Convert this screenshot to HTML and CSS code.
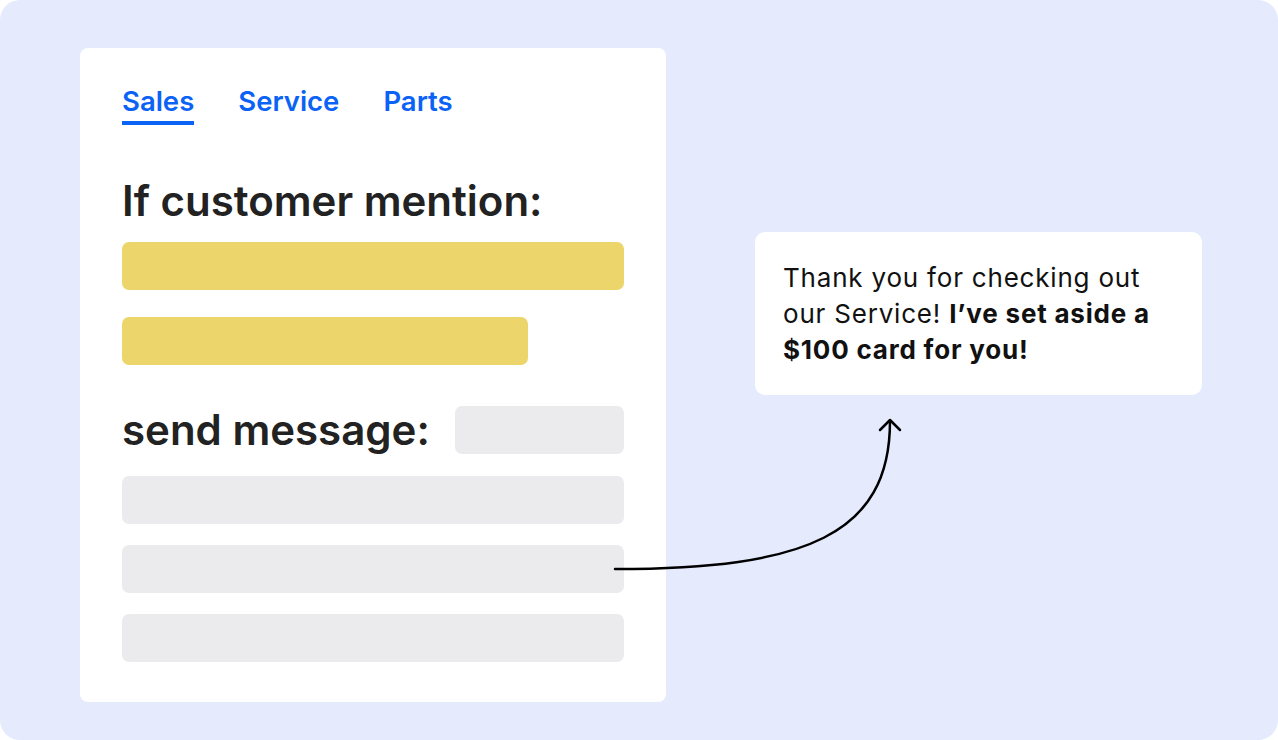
FILE: index.html
```html
<!DOCTYPE html>
<html>
<head>
<meta charset="utf-8">
<link rel="stylesheet" href="styles.css">
</head>
<body>
<div class="stage">
  <div class="card">
    <nav class="tabs">
      <span class="tab active">Sales</span>
      <span class="tab">Service</span>
      <span class="tab">Parts</span>
    </nav>
    <h2 class="heading">If customer mention:</h2>
    <div class="bar yellow full"></div>
    <div class="bar yellow short"></div>
    <div class="send-row">
      <h2 class="heading send">send message:</h2>
      <div class="bar gray chip"></div>
    </div>
    <div class="bar gray full"></div>
    <div class="bar gray full"></div>
    <div class="bar gray full last"></div>
  </div>
  <div class="message">
    <p>Thank you for checking out our Service! <strong>I’ve set aside a $100 card for you!</strong></p>
  </div>
  <svg class="connector" width="1278" height="740" viewBox="0 0 1278 740">
    <path d="M615 569 C 805 569, 890 535, 890 421" fill="none" stroke="#000" stroke-width="2.5" stroke-linecap="round"/>
    <path d="M880 430 L890 420 L900 430" fill="none" stroke="#000" stroke-width="2.5" stroke-linecap="round" stroke-linejoin="round"/>
  </svg>
</div>
</body>
</html>
```
FILE: styles.css
```css
* { box-sizing: border-box; }
html, body { margin: 0; padding: 0; background: #ffffff; }
body { font-family: Inter, "Noto Sans", sans-serif; }
.stage {
  position: relative;
  width: 1278px;
  height: 740px;
  background: #E5EBFD;
  border-radius: 20px;
  display: flex;
  align-items: flex-start;
  padding: 48px 0 0 80px;
}
.card {
  width: 586px;
  height: 654px;
  background: #fff;
  border-radius: 8px;
  padding: 37px 42px 0 42px;
  display: flex;
  flex-direction: column;
}
.tabs {
  display: flex;
  gap: 44px;
}
.tab {
  font-size: 27.5px;
  font-weight: 600;
  color: #0B63F6;
  line-height: 32px;
  padding-bottom: 4px;
  border-bottom: 4px solid transparent;
}
.tab.active { border-bottom-color: #0B63F6; }
.heading {
  margin: 0;
  font-size: 42px;
  font-weight: 600;
  color: #222;
  line-height: 48px;
}
.card > .heading { margin-top: 52px; margin-bottom: 17px; }
.bar { height: 48px; border-radius: 7px; flex: none; }
.yellow { background: #ECD66C; }
.gray { background: #EBEBED; }
.full { width: 502px; }
.short { width: 406px; margin-top: 27px; }
.send-row {
  display: flex;
  align-items: center;
  justify-content: space-between;
  width: 502px;
  margin-top: 41px;
  margin-bottom: 22px;
}
.chip { width: 169px; }
.gray.full + .gray.full { margin-top: 21px; }
.gray.full.last { margin-top: 22px; }
.message {
  margin: 184px 0 0 89px;
  width: 447px;
  height: 163px;
  background: #fff;
  border-radius: 10px;
  padding: 28px 39px 0 28px;
}
.message p {
  margin: 0;
  font-size: 26px;
  line-height: 36px;
  letter-spacing: 0.8px;
  color: #111;
  font-weight: 400;
}
.message strong { font-weight: 700; }
.connector {
  position: absolute;
  left: 0;
  top: 0;
  pointer-events: none;
}
```
